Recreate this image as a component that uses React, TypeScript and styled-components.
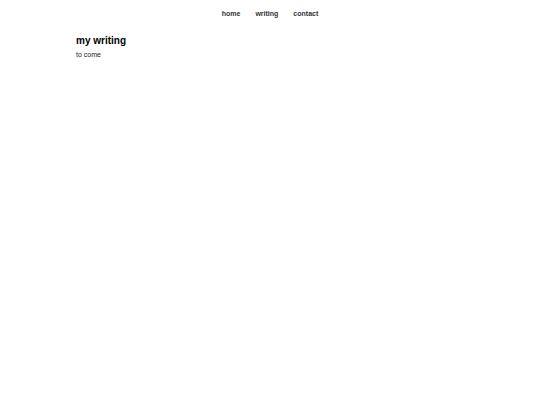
import React, { FC } from "react";
import styled, { createGlobalStyle } from "styled-components";

const GlobalStyle = createGlobalStyle`
    html, body {
        margin: 0;
        padding: 0;
        background-color: #ffffff;
        font-family: "Liberation Sans", Arial, sans-serif;
    }
`;

const links = ["home", "writing", "contact"];

const App: FC = () => {
    return (
        <>
            <GlobalStyle />
            <Page>
                <Nav>
                    {links.map(l => (
                        <NavLink key={l} href="#">{l}</NavLink>
                    ))}
                </Nav>
                <Main>
                    <Title>my writing</Title>
                    <Body>to come</Body>
                </Main>
            </Page>
        </>
    );
};

export default App;

const Page = styled.div`
    display: flex;
    flex-direction: column;
    width: 100%;
    min-height: 405px;
`;

const Nav = styled.nav`
    display: flex;
    justify-content: center;
    align-items: center;
    gap: 15px;
    padding-top: 9px;
    height: 10px;
`;

const NavLink = styled.a`
    font-size: 7px;
    font-weight: bold;
    color: #333333;
    text-decoration: none;
    line-height: 10px;
`;

const Main = styled.main`
    width: 388px;
    margin: 0 auto;
    padding-top: 15px;
`;

const Title = styled.h1`
    font-size: 10px;
    font-weight: bold;
    color: #000000;
    margin: 0;
    line-height: 14px;
`;

const Body = styled.p`
    font-size: 7px;
    color: #222222;
    margin: 2px 0 0;
    line-height: 10px;
`;
